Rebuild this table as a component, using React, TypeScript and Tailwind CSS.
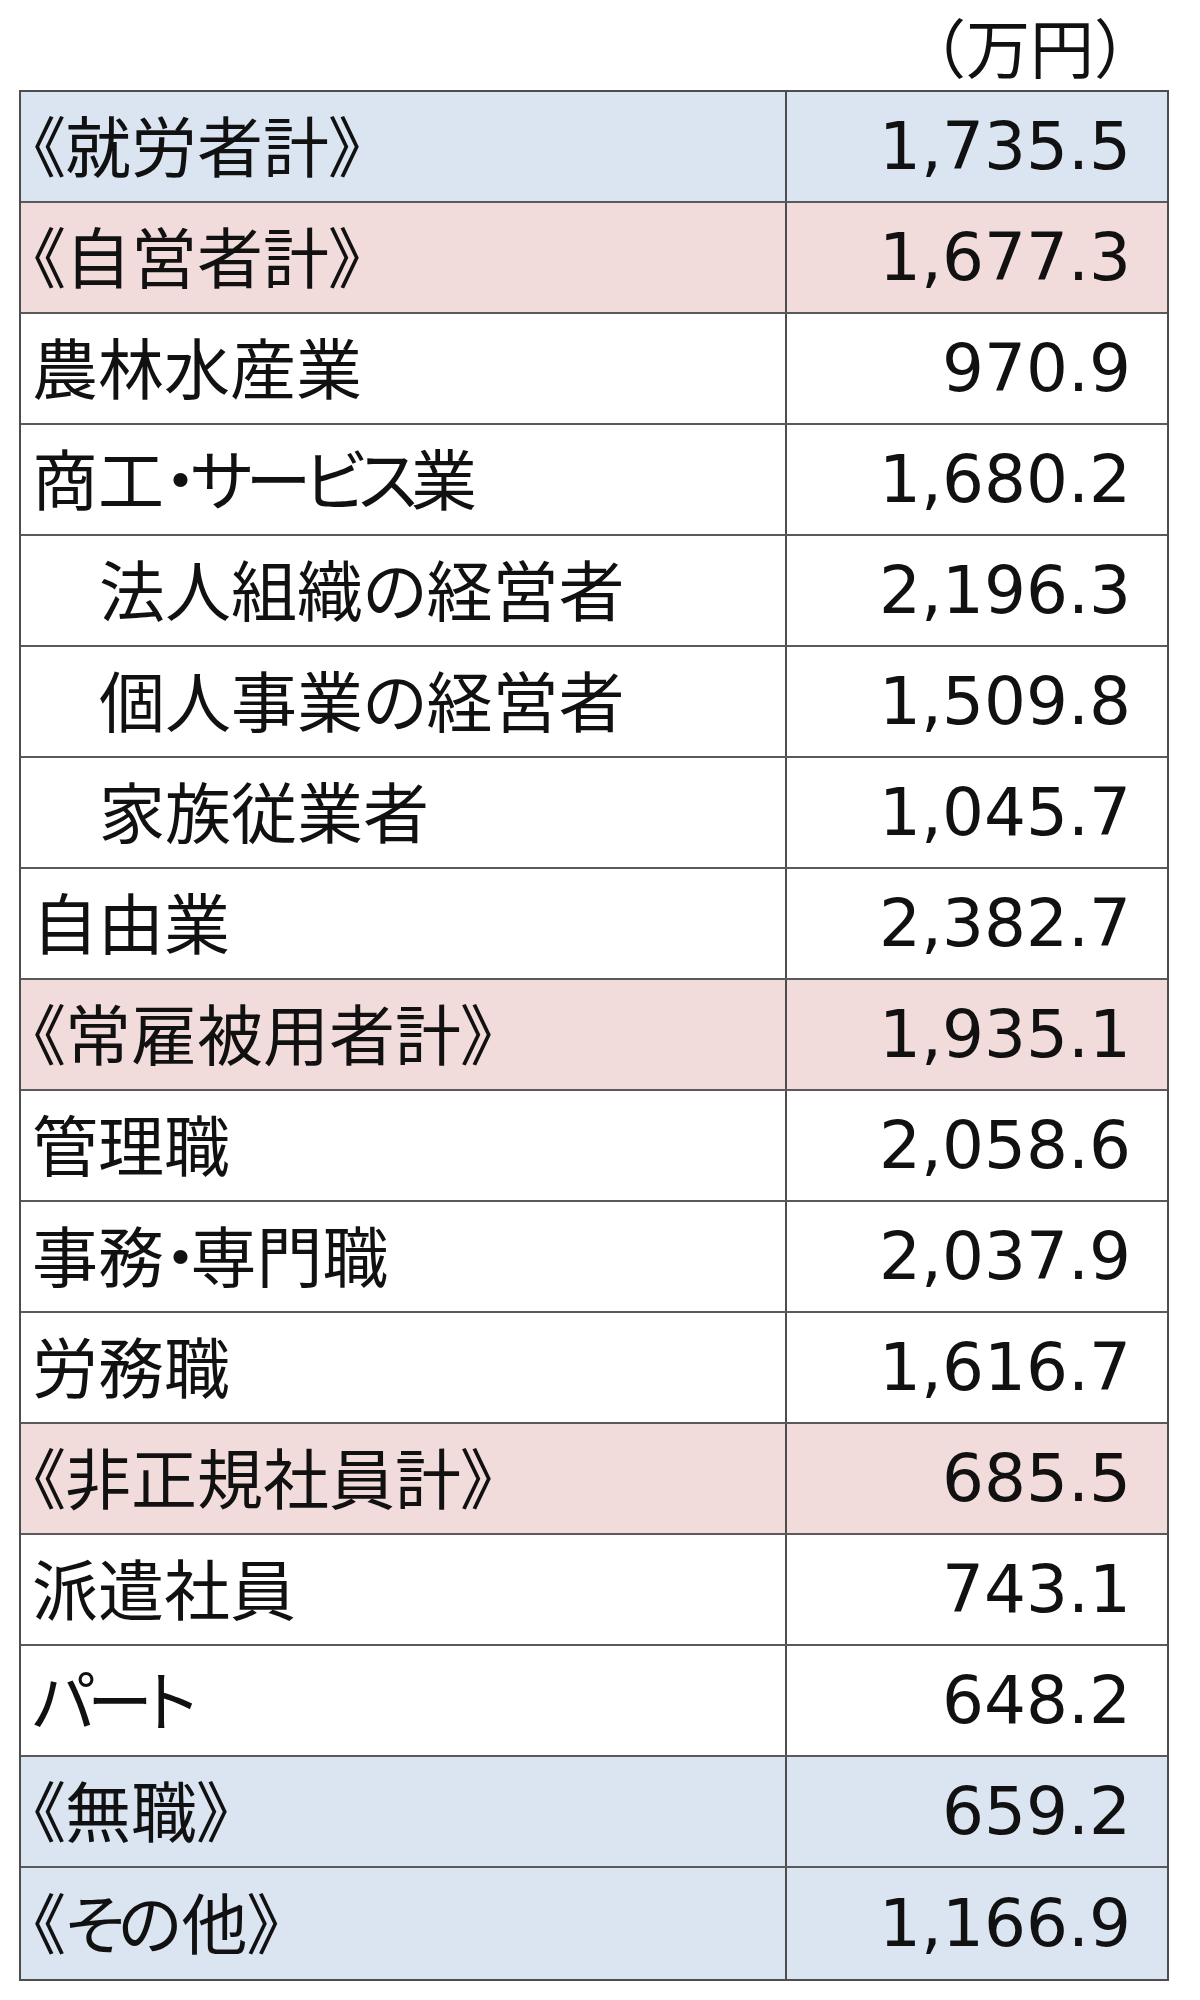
const rows: { label: string; value: string; tone?: "blue" | "pink"; indent?: boolean }[] = [
  { label: "《就労者計》", value: "1,735.5", tone: "blue" },
  { label: "《自営者計》", value: "1,677.3", tone: "pink" },
  { label: "農林水産業", value: "970.9" },
  { label: "商工・サービス業", value: "1,680.2" },
  { label: "法人組織の経営者", value: "2,196.3", indent: true },
  { label: "個人事業の経営者", value: "1,509.8", indent: true },
  { label: "家族従業者", value: "1,045.7", indent: true },
  { label: "自由業", value: "2,382.7" },
  { label: "《常雇被用者計》", value: "1,935.1", tone: "pink" },
  { label: "管理職", value: "2,058.6" },
  { label: "事務・専門職", value: "2,037.9" },
  { label: "労務職", value: "1,616.7" },
  { label: "《非正規社員計》", value: "685.5", tone: "pink" },
  { label: "派遣社員", value: "743.1" },
  { label: "パート", value: "648.2" },
  { label: "《無職》", value: "659.2", tone: "blue" },
  { label: "《その他》", value: "1,166.9", tone: "blue" },
];

// katakana runs are set tighter, like the narrow kana of the original font
function Label({ text }: { text: string }) {
  const parts = text.split(/([\u30a0-\u30ff]+|[そ]+)/).filter(Boolean);
  return (
    <>
      {parts.map((p, i) =>
        /^[\u30a0-\u30ffそ]+$/.test(p) ? (
          <span key={i} className="tracking-[-0.1em]">
            {p}
          </span>
        ) : (
          <span key={i}>{p}</span>
        )
      )}
    </>
  );
}

export default function App() {
  return (
    <div className="w-[1200px] h-[2000px] bg-white text-[#111] font-['Noto_Sans_CJK_JP',sans-serif]">
      {/* unit caption */}
      <div className="h-[90px] flex items-center justify-end pr-[42px] text-[64px] leading-none">
        （万円）
      </div>

      <div className="ml-[19px] w-[1150px] border-2 border-[#4d4d4d] divide-y-2 divide-[#5a5a5a]">
        {rows.map((row) => (
          <div
            key={row.label}
            className={`flex h-[111px] ${
              row.tone === "blue" ? "bg-[#dbe5f1]" : row.tone === "pink" ? "bg-[#f2dcdb]" : "bg-white"
            }`}
          >
            <div
              className={`w-[766px] shrink-0 border-r-2 border-[#4d4d4d] flex items-center pb-[8px] text-[66px] leading-none [font-feature-settings:'palt'] ${
                row.indent ? "pl-[78px]" : "pl-[11px]"
              }`}
            >
              <Label text={row.label} />
            </div>
            <div className="flex-1 flex items-center justify-end pr-[36px] text-[66px] leading-none font-['DejaVu_Sans',sans-serif]">
              {row.value}
            </div>
          </div>
        ))}
      </div>
    </div>
  );
}
